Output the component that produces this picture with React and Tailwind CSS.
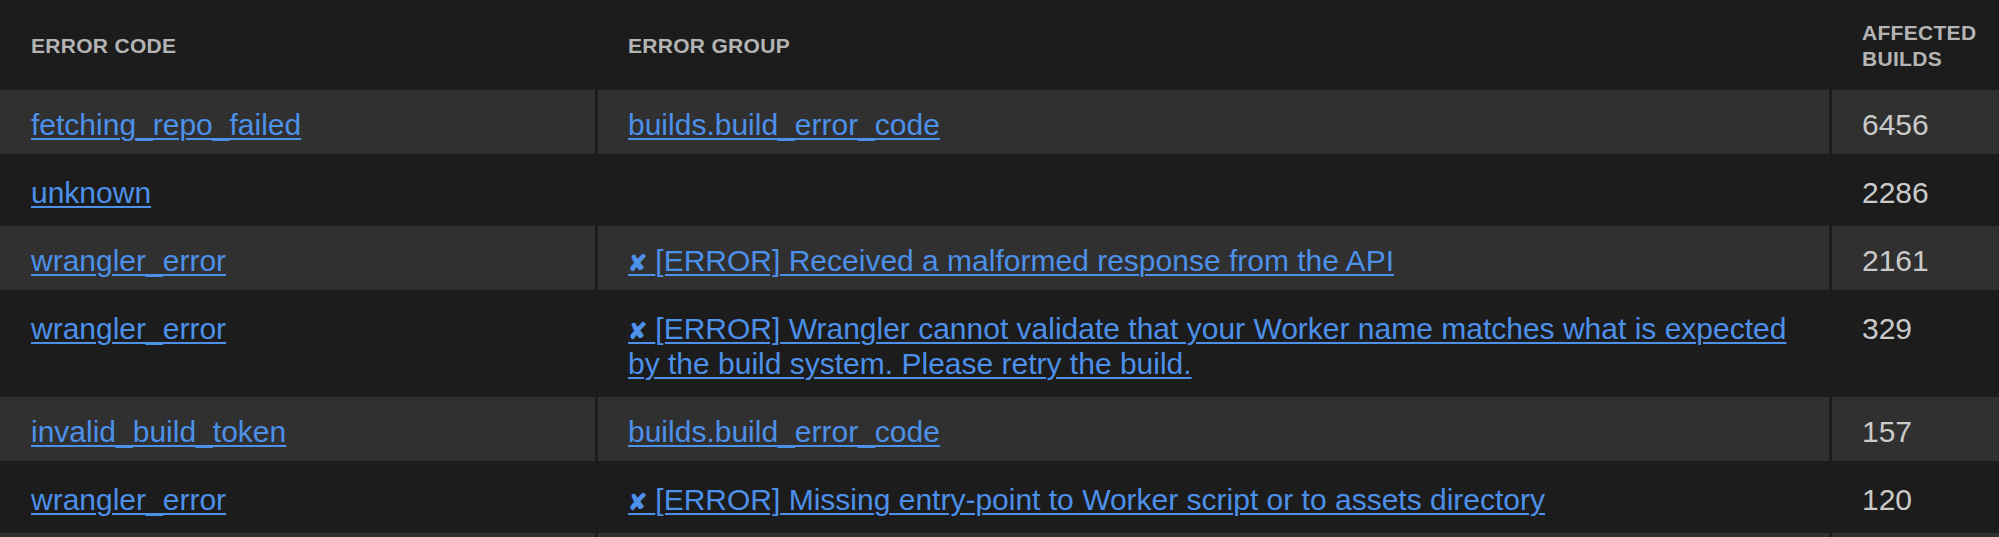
import React from 'react';

const rows = [
  { code: 'fetching_repo_failed', group: 'builds.build_error_code', count: 6456 },
  { code: 'unknown', group: '', count: 2286 },
  { code: 'wrangler_error', group: '[ERROR] Received a malformed response from the API', mark: true, count: 2161 },
  {
    code: 'wrangler_error',
    group: '[ERROR] Wrangler cannot validate that your Worker name matches what is expected by the build system. Please retry the build.',
    mark: true,
    count: 329,
  },
  { code: 'invalid_build_token', group: 'builds.build_error_code', count: 157 },
  { code: 'wrangler_error', group: '[ERROR] Missing entry-point to Worker script or to assets directory', mark: true, count: 120 },
  { code: 'fetching_repo_failed', group: 'builds.build_error_code', count: 98 },
];

const linkCls = 'text-[#4c90ea] underline decoration-[2px] underline-offset-[3px] cursor-pointer';

export default function App() {
  return (
    <div className="h-screen bg-[#1c1c1c] overflow-hidden" style={{ fontFamily: '"Liberation Sans", Arial, sans-serif' }}>
      <div className="grid grid-cols-[595px_1231px_1fr] gap-x-[3px] gap-y-[4px]">
        {/* header */}
        <div className="h-[86px] flex items-center pt-[6px] pl-[31px] text-[21px] font-bold tracking-[0.3px] text-[#b4b4b4] uppercase">Error code</div>
        <div className="h-[86px] flex items-center pt-[6px] pl-[30px] text-[21px] font-bold tracking-[0.3px] text-[#b4b4b4] uppercase">Error group</div>
        <div className="h-[86px] flex items-center pt-[6px] pl-[30px] pr-2 text-[21px] leading-[26px] font-bold tracking-[0.3px] text-[#b4b4b4] uppercase">Affected builds</div>

        {rows.map((r, i) => {
          const bg = i % 2 === 0 ? 'bg-[#303030]' : 'bg-transparent';
          return (
            <React.Fragment key={i}>
              <div className={`${bg} pl-[31px] pr-4 pt-[17px] pb-[12px] text-[30px] leading-[35px]`}>
                <a className={linkCls}>{r.code}</a>
              </div>
              <div className={`${bg} pl-[30px] pr-[30px] pt-[17px] pb-[12px] text-[30px] leading-[35px]`}>
                {r.group && (
                  <a className={linkCls}>
                    {r.mark && <span className="text-[23px] leading-none font-bold">✘</span>}
                    {r.mark && ' '}
                    {r.group}
                  </a>
                )}
              </div>
              <div className={`${bg} pl-[30px] pt-[17px] pb-[12px] text-[30px] leading-[35px] text-[#cacaca]`}>
                {r.count}
              </div>
            </React.Fragment>
          );
        })}
      </div>
    </div>
  );
}
